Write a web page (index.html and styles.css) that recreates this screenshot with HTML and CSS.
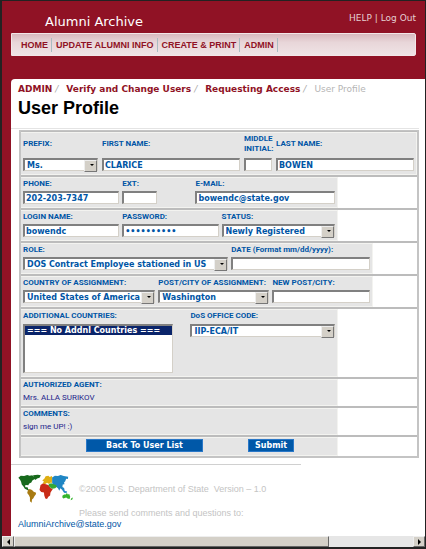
FILE: index.html
```html
<!DOCTYPE html>
<html lang="en">
<head>
<meta charset="utf-8">
<title>Alumni Archive - User Profile</title>
<link rel="stylesheet" href="styles.css">
</head>
<body>
<div class="window">
  <header class="banner">
    <div class="banner-top">
      <span class="brand">Alumni Archive</span>
      <span class="session"><a href="#">HELP</a> | <a href="#">Log Out</a></span>
    </div>
    <nav class="menu">
      <a href="#">HOME</a><a href="#">UPDATE ALUMNI INFO</a><a href="#">CREATE &amp; PRINT</a><a href="#">ADMIN</a>
    </nav>
  </header>

  <main class="page">
    <div class="crumbs">
      <a href="#">ADMIN</a><i>/</i><a href="#">Verify and Change Users</a><i>/</i><a href="#">Requesting Access</a><i>/</i><span>User Profile</span>
    </div>
    <h1>User Profile</h1>

    <form class="profile">
      <div class="row"><div class="cells name-row">
        <div class="field"><label for="prefix">PREFIX:</label><span class="pick"><select id="prefix"><option>Ms.</option></select></span></div>
        <div class="field"><label for="first">FIRST NAME:</label><input id="first" type="text" value="CLARICE"></div>
        <div class="field"><label for="middle">MIDDLE<br>INITIAL:</label><input id="middle" type="text"></div>
        <div class="field"><label for="last">LAST NAME:</label><input id="last" type="text" value="BOWEN"></div>
      </div></div>

      <div class="row"><div class="cells medium contact-row">
        <div class="field"><label for="phone">PHONE:</label><input id="phone" type="text" value="202-203-7347"></div>
        <div class="field"><label for="ext">EXT:</label><input id="ext" class="half" type="text"></div>
        <div class="field"><label for="email">E-MAIL:</label><input id="email" type="text" value="bowendc@state.gov"></div>
      </div></div>

      <div class="row"><div class="cells medium login-row">
        <div class="field"><label for="login">LOGIN NAME:</label><input id="login" type="text" value="bowendc"></div>
        <div class="field"><label for="password">PASSWORD:</label><input id="password" type="password" value="alumni2005"></div>
        <div class="field"><label for="status">STATUS:</label><span class="pick"><select id="status"><option>Newly Registered</option></select></span></div>
      </div></div>

      <div class="row"><div class="cells wide role-row">
        <div class="field"><label for="role">ROLE:</label><span class="pick"><select id="role"><option>DOS Contract Employee stationed in US</option></select></span></div>
        <div class="field"><label for="date">DATE (Format mm/dd/yyyy):</label><input id="date" type="text"></div>
      </div></div>

      <div class="row"><div class="cells wide post-row">
        <div class="field"><label for="country">COUNTRY OF ASSIGNMENT:</label><span class="pick"><select id="country"><option>United States of America</option></select></span></div>
        <div class="field"><label for="post">POST/CITY OF ASSIGNMENT:</label><span class="pick"><select id="post"><option>Washington</option></select></span></div>
        <div class="field"><label for="newpost">NEW POST/CITY:</label><input id="newpost" type="text"></div>
      </div></div>

      <div class="row"><div class="cells medium office-row">
        <div class="field"><label for="additional">ADDITIONAL COUNTRIES:</label><select id="additional" class="list" size="4"><option selected>=== No Addnl Countries ===</option></select></div>
        <div class="field"><label for="office">DoS OFFICE CODE:</label><span class="pick"><select id="office"><option>IIP-ECA/IT</option></select></span></div>
      </div></div>

      <div class="row"><div class="cells medium note"><h2>AUTHORIZED AGENT:</h2><p>Mrs. ALLA SURIKOV</p></div></div>
      <div class="row"><div class="cells medium note"><h2>COMMENTS:</h2><p>sign me UP! :)</p></div></div>
      <div class="row"><div class="cells medium actions">
        <button type="button" class="back">Back To User List</button>
        <button type="submit" class="submit">Submit</button>
      </div></div>
    </form>

    <hr>
    <footer>
      <div class="legal">
        <svg class="map" viewBox="60 42 164 86" aria-hidden="true">
          <path fill="#17691c" d="M61 52l7-6 10 1 9-3 7 2 8-1 4 5 5 1-2 5-7 4-3 6-6 3-3 5-5-1-5 2 2 5 6 0 2 6 4 3-5 0-9-5-4-6-5-6-2-8-3-6zM104 45l14-2 9 2-4 7-7 2-5 5-4-6z"/>
          <path fill="#a87b12" d="M89 89l5-4 7 3 5 5 7 3-1 5-4 5-3 6-4 4-1 9-5-4 0-11-3-7-5-6z"/>
          <path fill="#dfae12" d="M131 60l6-5 4-7 8-2 4 4 6-3 2 6-2 9 2 5-7 0-3 3-6-3-6 4-7-2 4-6z"/>
          <path fill="#c92c17" d="M126 73l7-4 9 2 8 3 5 8 7 3-4 6-3 5-1 8-5 4-4 6-5-1-3-9-1-9-8-1-5-6z"/>
          <path fill="#1f86c4" d="M160 51l8-5 9 1 8-3 9 3 13 2-1 7-5-1-3 8-3 2 1 6-5 1-1 7 5 3 2 9 7 1-2 5-7-1-6-9-5-4-3 7-4-7-5-4-9-3-3-10z"/>
          <path fill="#35a934" d="M150 70l7-2 7 3 7 2 3 5-5 5-8 1-5-2-6-6z"/>
          <path fill="#35b52d" d="M190 105l5-4 5 0 3-4 3 4 4-1 3 8-2 6-6-1-4-3-8 3-3-3zM216 112l5-2-2 6-5 2z"/>
        </svg>
        <p>©2005 U.S. Department of State&nbsp; Version – 1.0</p>
      </div>
      <p class="contact">Please send comments and questions to:</p>
      <a href="mailto:AlumniArchive@state.gov">AlumniArchive@state.gov</a>
    </footer>
  </main>

  <div class="scrollbar">
    <button type="button" class="left" aria-label="Scroll left"></button>
    <div class="track"><div class="thumb"></div></div>
    <button type="button" class="right" aria-label="Scroll right"></button>
  </div>
</div>
</body>
</html>
```
FILE: styles.css
```css
* {
  box-sizing: border-box;
}

body {
  margin: 0;
  font-family: "Liberation Sans", Arial, sans-serif;
  font-size: 8px;
  line-height: 10px;
  color: #0055a5;
}

a {
  color: inherit;
  text-decoration: none;
}

h1, h2, p {
  margin: 0;
}

.window {
  display: flex;
  flex-direction: column;
  min-height: 100vh;
  background: #901225;
  border: solid #222;
  border-width: 1px 1px 2px 2px;
}

/* Banner and menu */
.banner {
  padding: 10px 9px 23px;
}

.banner-top {
  display: flex;
  justify-content: space-between;
  align-items: center;
  height: 22px;
  padding-left: 34px;
  color: #fff;
  font-family: "DejaVu Sans", Verdana, sans-serif;
}

.brand {
  font-size: 13px;
  line-height: 18px;
}

.session {
  align-self: flex-start;
  margin-top: 2px;
  font-size: 9px;
  color: #e6cfd3;
}

.menu {
  display: flex;
  align-items: center;
  height: 23px;
  padding: 0 1px;
  border: 1px solid #f3e6e8;
  border-radius: 0 2px 2px 0;
  background: linear-gradient(#d9b9be, #e8d6d9 40%, #efe3e5);
  color: #901225;
  font-size: 9px;
  font-weight: bold;
}

.menu a {
  padding: 2px 3px 2px 4px;
  border-right: 1px solid #a9bcc2;
}

.menu a:first-child {
  padding-left: 8px;
}

/* Content panel */
.page {
  flex: 1;
  margin-left: 9px;
  padding: 4px 6px 0 0;
  border-top-left-radius: 4px;
  background: #fff;
}

.crumbs {
  padding-left: 7px;
  font-family: "DejaVu Sans", Verdana, sans-serif;
  font-size: 9px;
  line-height: 13px;
  font-weight: bold;
  white-space: nowrap;
  color: #901225;
}

.crumbs i {
  margin: 0 8px 0 3px;
  font-weight: normal;
  color: #aaa;
}

.crumbs span {
  font-weight: normal;
  color: #b5b5b5;
}

h1 {
  padding: 0 0 8px 7px;
  border-bottom: 1px solid #e4e4e4;
  font-size: 18px;
  line-height: 24px;
  color: #000;
}

/* Profile form */
.profile {
  margin: 1px 0 0 8px;
  border: 2px solid #c4c4c4;
  border-top-width: 1px;
}

.row {
  border-top: 2px solid #bcbcbc;
}

.row:first-child {
  border-top-width: 1px;
}

.cells {
  display: grid;
  padding: 1px 2px 3px;
  border: solid #f3f3f0;
  border-width: 1px 1px 1px 0;
  background: #e5e5e5;
}

.medium {
  width: 80%;
}

.wide {
  width: 89%;
}

.name-row {
  grid-template-columns: 75fr 138fr 28fr 138fr;
  column-gap: 4px;
}

.contact-row {
  grid-template-columns: 96fr 70fr 139fr;
  column-gap: 3px;
}

.login-row {
  grid-template-columns: 96fr 96fr 113fr;
  column-gap: 3px;
}

.role-row {
  grid-template-columns: 205fr 139fr;
  column-gap: 3px;
}

.post-row {
  grid-template-columns: 131fr 110fr 97fr;
  column-gap: 3px;
}

.office-row {
  grid-template-columns: 164fr 144fr;
  column-gap: 3px;
}

.field {
  display: flex;
  flex-direction: column;
  gap: 2px;
  min-width: 0;
}

.name-row .field {
  gap: 4px;
}

.name-row label {
  display: flex;
  align-items: center;
  height: 20px;
}

label, h2 {
  font-family: Roboto, Tahoma, sans-serif;
  font-size: 8px;
  line-height: 10px;
  font-weight: bold;
  white-space: nowrap;
}

input, select {
  width: 100%;
  height: 13px;
  margin: 0;
  padding: 0 1px;
  border: 1px solid #d4d0c8;
  border-top: 2px solid #808080;
  border-left: 2px solid #808080;
  border-radius: 0;
  background: #fff;
  color: #0055a5;
  font: bold 8px "DejaVu Sans", Verdana, sans-serif;
  appearance: none;
}

.half {
  width: 50%;
}

.pick {
  position: relative;
  display: block;
  height: 13px;
}

.pick select {
  display: block;
  padding: 0 12px 0 2px;
}

.pick::before {
  content: "";
  position: absolute;
  top: 2px;
  right: 1px;
  width: 11px;
  height: 10px;
  border: 1px solid #777;
  border-top-color: #eee;
  border-left-color: #eee;
  background: #d4d0c8;
  pointer-events: none;
}

.pick::after {
  content: "";
  position: absolute;
  top: 6px;
  right: 4px;
  border: solid transparent;
  border-width: 2px 2px 0;
  border-top-color: #000;
  pointer-events: none;
}

.list {
  width: 91%;
  height: 49px;
  padding: 0;
  overflow: hidden;
}

.list option {
  min-height: 0;
  padding: 0 2px;
  font: bold 8px "DejaVu Sans", Verdana, sans-serif;
  line-height: 10px;
}

.list option:checked {
  background: #0a246a linear-gradient(#0a246a, #0a246a);
  color: #fff;
}

.office-row .field {
  gap: 3px;
}

.note {
  padding: 0 2px;
}

.note p {
  font-family: Roboto, Tahoma, sans-serif;
  line-height: 15px;
  color: #22228a;
}

.actions {
  grid-template-columns: 64fr 116fr 44fr 46fr 42fr;
  padding: 1px 0 3px;
}

.actions button {
  height: 13px;
  padding: 0;
  border: 1px solid #2a78c8;
  background: #0058a8;
  color: #fff;
  font: bold 8px "DejaVu Sans", Verdana, sans-serif;
}

.back {
  grid-column: 2;
}

.submit {
  grid-column: 4;
}

/* Footer */
hr {
  width: 71%;
  height: 1px;
  margin: 6px 0 0;
  border: 0;
  background: #d0d0d0;
}

footer {
  padding: 9px 0 4px 7px;
  color: #c4c4c4;
  font-size: 9px;
}

.legal {
  display: flex;
  align-items: center;
  gap: 5px;
}

.map {
  width: 56px;
  height: 30px;
}

.contact {
  margin: 4px 0 0 61px;
}

footer a {
  display: block;
  line-height: 12px;
  color: #0055a5;
}

/* Horizontal scrollbar */
.scrollbar {
  display: flex;
  height: 11px;
  background: #e6e6e6;
}

.scrollbar button {
  display: flex;
  align-items: center;
  justify-content: center;
  width: 12px;
  padding: 0;
  border: 1px solid #666;
  border-top-color: #eee;
  border-left-color: #eee;
  background: #d4d0c8;
}

.scrollbar button::before {
  content: "";
  border: 3px solid transparent;
}

.scrollbar .left::before {
  border-left: 0;
  border-right-color: #000;
}

.scrollbar .right::before {
  border-right: 0;
  border-left-color: #000;
}

.track {
  flex: 1;
}

.thumb {
  width: 79%;
  height: 100%;
  border: 1px solid #666;
  border-top-color: #eee;
  border-left-color: #eee;
  background: #d4d0c8;
}
```
